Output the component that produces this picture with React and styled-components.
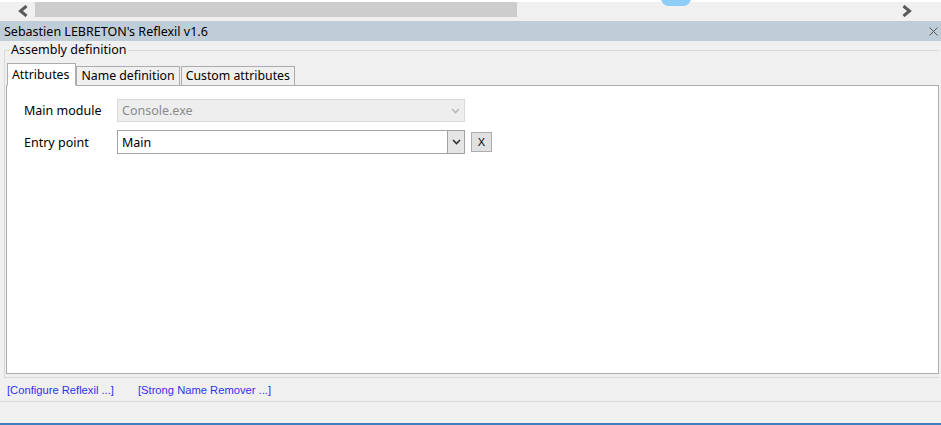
import styled, { createGlobalStyle } from "styled-components";

const GlobalStyle = createGlobalStyle`
  html, body {
    margin: 0;
    padding: 0;
    background: #f0f0f0;
  }
  body {
    font-family: "Noto Sans", "Open Sans", sans-serif;
    color: #000;
  }
`;

function Chevron({ dir = "left", color = "#5a5a5a" }) {
  const d = dir === "left" ? "M8.5 1 L2.5 6 L8.5 11" : "M1.5 1 L7.5 6 L1.5 11";
  return (
    <svg width="10" height="12" viewBox="0 0 10 12">
      <path d={d} fill="none" stroke={color} strokeWidth="3" />
    </svg>
  );
}

function CloseIcon() {
  return (
    <svg width="9" height="9" viewBox="0 0 9 9">
      <path d="M0.5 0.5 L8.5 8.5 M8.5 0.5 L0.5 8.5" stroke="#555" strokeWidth="1" />
    </svg>
  );
}

function DownArrow({ color }) {
  return (
    <svg width="9" height="6" viewBox="0 0 9 6">
      <path d="M1 1 L4.5 4.5 L8 1" fill="none" stroke={color} strokeWidth="1.6" />
    </svg>
  );
}

function App() {
  return (
    <>
      <GlobalStyle />
      <Page>
        <TopStrip />
        <ScrollBar>
          <ArrowBtn>
            <Chevron dir="left" />
          </ArrowBtn>
          <Track>
            <Thumb />
          </Track>
          <ArrowBtn>
            <Chevron dir="right" />
          </ArrowBtn>
          <Blob />
        </ScrollBar>
        <TitleBar>
          <span>Sebastien LEBRETON's Reflexil v1.6</span>
          <CloseIcon />
        </TitleBar>
        <Body>
          <Group>
            <Legend>Assembly definition</Legend>
            <Tabs>
              <Tab $active>Attributes</Tab>
              <Tab>Name definition</Tab>
              <Tab>Custom attributes</Tab>
            </Tabs>
            <TabPage>
              <FieldRow>
                <Label>Main module</Label>
                <Combo $disabled>
                  <ComboText $disabled>Console.exe</ComboText>
                  <DisabledArrow>
                    <DownArrow color="#b8b8b8" />
                  </DisabledArrow>
                </Combo>
              </FieldRow>
              <FieldRow>
                <Label>Entry point</Label>
                <Combo>
                  <ComboText>Main</ComboText>
                  <DropBtn>
                    <DownArrow color="#333" />
                  </DropBtn>
                </Combo>
                <ClearBtn>X</ClearBtn>
              </FieldRow>
            </TabPage>
          </Group>
          <Links>
            <Link>[Configure Reflexil ...]</Link>
            <Link>[Strong Name Remover ...]</Link>
          </Links>
          <StatusArea />
        </Body>
        <TaskEdge />
      </Page>
    </>
  );
}

export default App;

const Page = styled.div`
  width: 941px;
  height: 425px;
  display: flex;
  flex-direction: column;
  overflow: hidden;
  background: #f0f0f0;
`;

const TopStrip = styled.div`
  height: 2px;
  background: #fff;
`;

const ScrollBar = styled.div`
  position: relative;
  height: 18px;
  display: flex;
  align-items: flex-start;
  background: #f0f0f0;
  padding: 0 26px 0 15px;
`;

const ArrowBtn = styled.div`
  width: 16px;
  height: 15px;
  display: flex;
  align-items: center;
  justify-content: center;
  padding-top: 1px;
`;

const Track = styled.div`
  flex: 1;
  height: 15px;
  margin: 0 0 0 4px;
  padding-right: 382px;
`;

const Thumb = styled.div`
  height: 15px;
  background: #cdcdcd;
`;

const Blob = styled.div`
  position: absolute;
  left: 661px;
  top: -4px;
  width: 30px;
  height: 8px;
  border-radius: 0 0 10px 10px;
  background: #8fcdf9;
`;

const TitleBar = styled.div`
  height: 20px;
  margin-top: 1px;
  background: #bfcdd9;
  display: flex;
  align-items: center;
  justify-content: space-between;
  padding: 0 3px 0 4px;
  font-size: 12.5px;
  color: #000;
`;

const Body = styled.div`
  flex: 1;
  display: flex;
  flex-direction: column;
`;

const Group = styled.div`
  position: relative;
  margin: 9px 2px 0 4px;
  border: 1px solid #d9d9d9;
  border-right: none;
  padding: 11px 0 3px 1px;
  height: 312px;
  display: flex;
  flex-direction: column;
`;

const Legend = styled.div`
  position: absolute;
  top: -9px;
  left: 4px;
  padding: 0 2px;
  background: #f0f0f0;
  font-size: 12.5px;
  line-height: 16px;
`;

const Tabs = styled.div`
  display: flex;
  align-items: flex-end;
  padding-left: 1px;
  height: 23px;
  position: relative;
  z-index: 1;
`;

const Tab = styled.div`
  font-size: 12.3px;
  height: ${(p) => (p.$active ? "23px" : "19px")};
  line-height: ${(p) => (p.$active ? "21px" : "18px")};
  padding: ${(p) => (p.$active ? "0 6px 0 4px" : "0 4px")};
  margin-right: ${(p) => (p.$active ? "0" : "1px")};
  background: ${(p) => (p.$active ? "#fff" : "#f0f0f0")};
  border: 1px solid #adadad;
  border-bottom: ${(p) => (p.$active ? "1px solid #fff" : "none")};
  margin-bottom: ${(p) => (p.$active ? "-1px" : "0")};
  box-sizing: border-box;
`;

const TabPage = styled.div`
  flex: 1;
  background: #fff;
  border: 1px solid #adadad;
  padding: 13px 0 0 17px;
  display: flex;
  flex-direction: column;
  gap: 8px;
`;

const FieldRow = styled.div`
  display: flex;
  align-items: center;
`;

const Label = styled.div`
  width: 93px;
  font-size: 12.5px;
`;

const Combo = styled.div`
  width: 348px;
  height: ${(p) => (p.$disabled ? "23px" : "24px")};
  box-sizing: border-box;
  border: ${(p) => (p.$disabled ? "1px solid #d9d9d9" : "1px solid #a2a2a2")};
  background: ${(p) => (p.$disabled ? "#eeeeee" : "#fff")};
  display: flex;
  align-items: stretch;
`;

const ComboText = styled.div`
  flex: 1;
  display: flex;
  align-items: center;
  padding-left: 4px;
  font-size: 12.5px;
  color: ${(p) => (p.$disabled ? "#8a8a8a" : "#000")};
`;

const DisabledArrow = styled.div`
  width: 17px;
  display: flex;
  align-items: center;
  justify-content: center;
`;

const DropBtn = styled.div`
  width: 16px;
  background: #e5e5e5;
  border-left: 1px solid #a2a2a2;
  display: flex;
  align-items: center;
  justify-content: center;
`;

const ClearBtn = styled.div`
  width: 21px;
  height: 20px;
  margin-left: 6px;
  box-sizing: border-box;
  border: 1px solid #adadad;
  background: #e1e1e1;
  display: flex;
  align-items: center;
  justify-content: center;
  font-family: "Liberation Sans", Arial, sans-serif;
  font-size: 11px;
  color: #000;
`;

const Links = styled.div`
  height: 23px;
  border-bottom: 1px solid #d9d9d9;
  display: flex;
  align-items: center;
  gap: 24px;
  padding-left: 7px;
`;

const Link = styled.span`
  font-family: "Liberation Sans", Arial, sans-serif;
  font-size: 11.2px;
  color: #3030f0;
`;

const StatusArea = styled.div`
  flex: 1;
`;

const TaskEdge = styled.div`
  height: 2px;
  background: #3e7ebf;
`;
